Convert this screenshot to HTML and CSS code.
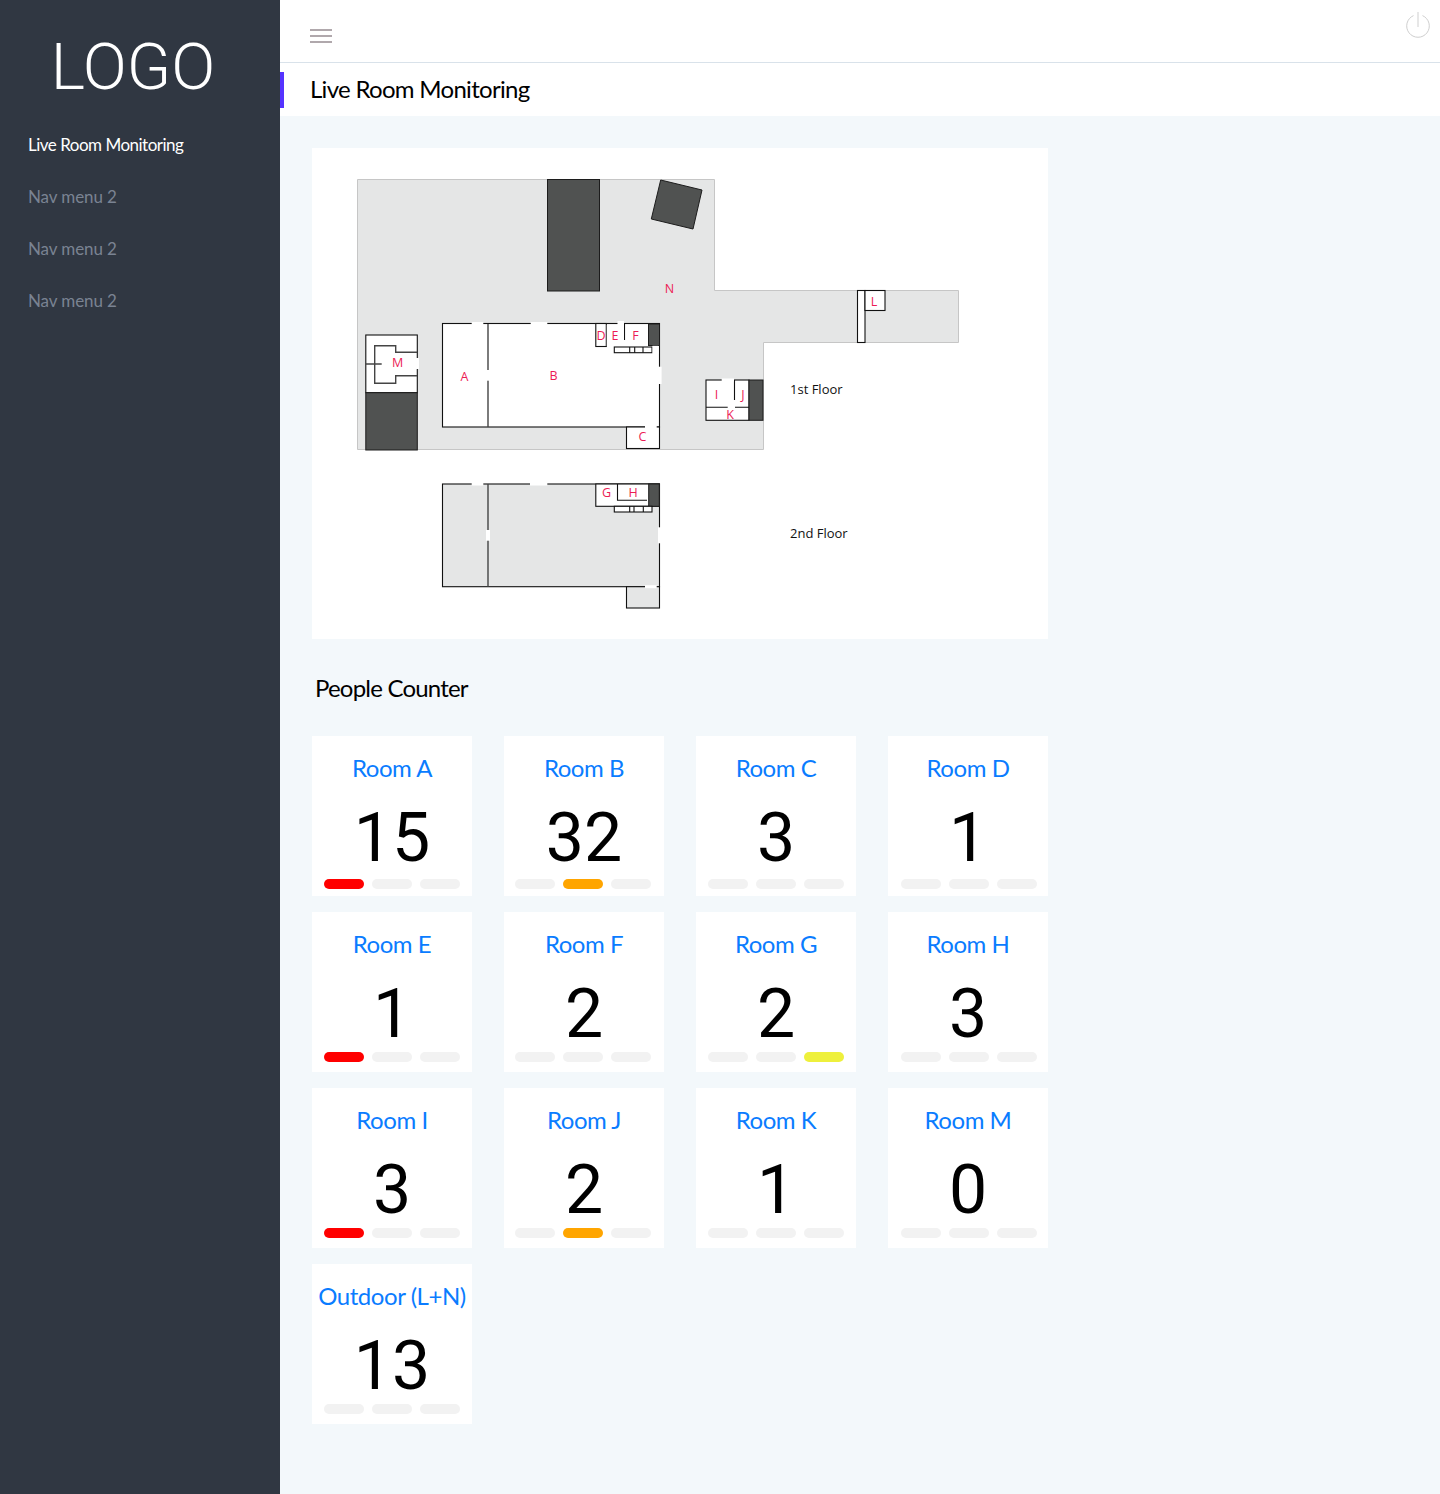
FILE: index.html
```html
<!DOCTYPE html>
<html lang="en">
<head>
<meta charset="utf-8">
<title>Live Room Monitoring</title>
<link rel="stylesheet" href="styles.css">
</head>
<body>
<div class="app">
  <aside class="sidebar">
    <div class="logo">LOGO</div>
    <nav class="nav">
      <a class="nav-item active">Live Room Monitoring</a>
      <a class="nav-item">Nav menu 2</a>
      <a class="nav-item">Nav menu 2</a>
      <a class="nav-item">Nav menu 2</a>
    </nav>
  </aside>
  <main class="main">
    <header class="topbar">
      <div class="burger"><span></span><span></span><span></span></div>
      <svg class="power" width="26" height="28" viewBox="0 0 26 28"><path d="M8.5 4.6a11.3 11.3 0 1 0 9 0"/><path d="M13 1v15"/></svg>
    </header>
    <div class="titlebar"><span class="accent"></span><h1 class="title">Live Room Monitoring</h1></div>
    <section class="content">
      <div class="plan">
        <svg class="plan-svg" width="736" height="491" viewBox="312 148 736 491">
          <path class="ground" d="M357.5 179.5H714.5V290.5H958.5V342.5H763.5V449.5H357.5Z"/>
          <rect class="dark" x="547.5" y="179.5" width="52" height="111.5"/>
          <path class="dark" d="M660.7 180L702 190L693 229L651.3 219Z"/>
          <!-- 1st floor main block -->
          <rect class="room" x="442.5" y="323.5" width="217" height="103.5"/>
          <path class="wall-soft" d="M488 324V427"/>
          <rect class="room" x="626.5" y="427" width="33" height="21.5"/>
          <rect class="room" x="595.8" y="323.5" width="10.5" height="23"/>
          <path class="wall" d="M624.5 324V340"/>
          <rect class="dark" x="648.5" y="324" width="11" height="21.5"/>
          <rect class="room" x="614.3" y="347" width="37.7" height="5.7"/>
          <path class="wall" d="M629.7 347V352.7M634.7 347V352.7M643 347V352.7"/>
          <rect class="gap" x="606.8" y="325" width="10" height="21"/>
          <rect class="gap" x="617.5" y="321" width="6.5" height="19"/>
          <rect class="gap" x="471.7" y="322" width="11.6" height="3"/>
          <rect class="gap" x="530.7" y="322" width="16.6" height="3"/>
          <rect class="gap" x="486" y="370" width="4" height="10.7"/>
          <rect class="gap" x="658" y="366.7" width="3.6" height="17.3"/>
          <rect class="gap" x="645" y="425.5" width="11.7" height="3"/>
          <rect class="gap" x="652.5" y="345.8" width="6" height="8"/>
          <!-- M block -->
          <rect class="room" x="365.8" y="335" width="51.5" height="57.7"/>
          <rect class="dark" x="365.8" y="392.7" width="51.5" height="57.3"/>
          <path class="wall-soft" d="M417 352.3H395.7V345.7H374.7V383.3H395.7V375.7H417M366 364H381.7"/>
          <rect class="gap" x="415.5" y="358" width="3.5" height="11"/>
          <!-- L -->
          <rect class="room" x="857.5" y="290.5" width="7.5" height="52"/>
          <rect class="room" x="865" y="290.5" width="20" height="20"/>
          <!-- I J K -->
          <rect class="room" x="706" y="380" width="43" height="40.3"/>
          <rect class="dark" x="749" y="380" width="14" height="40.3"/>
          <path class="wall" d="M706 407.3H749M734.5 380V400"/>
          <rect class="gap" x="721.7" y="378.5" width="12.3" height="3"/>
          <rect class="gap" x="727.7" y="405.8" width="7.3" height="3"/>
          <!-- 2nd floor -->
          <rect class="room-gray" x="442.5" y="484" width="217" height="102.7"/>
          <path class="wall-soft" d="M488 484V586.7"/>
          <rect class="room-gray" x="626.5" y="586.7" width="33" height="21.3"/>
          <rect class="room" x="595.8" y="484" width="63.5" height="22.3"/>
          <path class="wall" d="M617.5 484V500.3H647"/>
          <rect class="dark" x="648.7" y="484" width="10.6" height="22.3"/>
          <rect class="room" x="614.3" y="506.3" width="37.7" height="5.7"/>
          <path class="wall" d="M629.7 506.3V512M634 506.3V512M643.3 506.3V512"/>
          <rect class="gap" x="471.7" y="482.5" width="11.6" height="3"/>
          <rect class="gap" x="530" y="482.5" width="17.3" height="3"/>
          <rect class="gap" x="486" y="530" width="4" height="10.7"/>
          <rect class="gap" x="658" y="527.3" width="3.6" height="16"/>
          <rect class="gap" x="645" y="585.2" width="11.7" height="3"/>
          <!-- labels -->
          <text class="lbl" x="464.5" y="381">A</text>
          <text class="lbl" x="553.5" y="380">B</text>
          <text class="lbl" x="642.5" y="441">C</text>
          <text class="lbl" x="601" y="340">D</text>
          <text class="lbl" x="615" y="339.5">E</text>
          <text class="lbl" x="635.5" y="339.5">F</text>
          <text class="lbl" x="606.5" y="497">G</text>
          <text class="lbl" x="633" y="497">H</text>
          <text class="lbl" x="716.5" y="398.5">I</text>
          <text class="lbl" x="743" y="398.5">J</text>
          <text class="lbl" x="730" y="419">K</text>
          <text class="lbl" x="874" y="306">L</text>
          <text class="lbl" x="397.5" y="367">M</text>
          <text class="lbl" x="669.5" y="293">N</text>
          <text class="floor" x="790" y="394">1st Floor</text>
          <text class="floor" x="790" y="538">2nd Floor</text>
        </svg>
      </div>
      <h2 class="section-title">People Counter</h2>
      <div class="cards">
        <div class="card"><div class="card-name">Room A</div><div class="card-num">15</div><div class="bars"><i class="red"></i><i></i><i></i></div></div>
        <div class="card"><div class="card-name">Room B</div><div class="card-num">32</div><div class="bars"><i></i><i class="orange"></i><i></i></div></div>
        <div class="card"><div class="card-name">Room C</div><div class="card-num">3</div><div class="bars"><i></i><i></i><i></i></div></div>
        <div class="card"><div class="card-name">Room D</div><div class="card-num">1</div><div class="bars"><i></i><i></i><i></i></div></div>
        <div class="card"><div class="card-name">Room E</div><div class="card-num">1</div><div class="bars"><i class="red"></i><i></i><i></i></div></div>
        <div class="card"><div class="card-name">Room F</div><div class="card-num">2</div><div class="bars"><i></i><i></i><i></i></div></div>
        <div class="card"><div class="card-name">Room G</div><div class="card-num">2</div><div class="bars"><i></i><i></i><i class="yellow"></i></div></div>
        <div class="card"><div class="card-name">Room H</div><div class="card-num">3</div><div class="bars"><i></i><i></i><i></i></div></div>
        <div class="card"><div class="card-name">Room I</div><div class="card-num">3</div><div class="bars"><i class="red"></i><i></i><i></i></div></div>
        <div class="card"><div class="card-name">Room J</div><div class="card-num">2</div><div class="bars"><i></i><i class="orange"></i><i></i></div></div>
        <div class="card"><div class="card-name">Room K</div><div class="card-num">1</div><div class="bars"><i></i><i></i><i></i></div></div>
        <div class="card"><div class="card-name">Room M</div><div class="card-num">0</div><div class="bars"><i></i><i></i><i></i></div></div>
        <div class="card"><div class="card-name">Outdoor (L+N)</div><div class="card-num">13</div><div class="bars"><i></i><i></i><i></i></div></div>
      </div>
    </section>
  </main>
</div>
</body>
</html>
```
FILE: styles.css
```css
* { box-sizing: border-box; }
html, body { margin: 0; padding: 0; }
body { font-family: "Lato", "Liberation Sans", sans-serif; font-weight: 300; background: #f3f8fb; color: #000; }
.app { display: flex; min-height: 1494px; }

.sidebar { width: 280px; flex: none; background: #303742; }
.logo { font-family: Roboto, sans-serif; font-weight: 300; font-size: 65px; line-height: 74px; color: #fff; text-align: center; padding: 30px 14px 0 0; }
.nav { display: flex; flex-direction: column; margin-top: 14px; }
.nav-item { height: 52px; display: flex; align-items: center; padding-left: 28px; font-size: 17px; font-weight: 400; letter-spacing: -0.1px; color: #7a8392; }
.nav-item.active { color: #fff; letter-spacing: -0.5px; }

.main { flex: 1; min-width: 0; display: flex; flex-direction: column; }
.topbar { height: 63px; background: #fff; border-bottom: 1px solid #d9e2ea; display: flex; justify-content: space-between; align-items: flex-start; padding: 0 9px 0 30px; }
.burger { display: flex; flex-direction: column; gap: 4.5px; width: 22px; margin-top: 29px; }
.burger span { height: 1.5px; background: #b0a8ac; }
.power { margin-top: 11px; fill: none; stroke: #cfcfcf; stroke-width: 1; }

.titlebar { height: 53px; background: #fff; display: flex; align-items: center; }
.accent { width: 4px; height: 36px; background: #5533ff; flex: none; }
.title { margin: 0 0 2px 26px; font-size: 24px; font-weight: 400; line-height: 51px; letter-spacing: -0.7px; }

.content { padding: 32px 0 0 32px; }
.plan { width: 736px; height: 491px; background: #fff; }
.plan-svg { display: block; }
.ground { fill: #e5e6e6; stroke: #c6c6c6; stroke-width: 1; }
.dark { fill: #505251; stroke: #1c1c1c; stroke-width: 1; }
.room { fill: #fff; stroke: #111; stroke-width: 1.1; }
.room-gray { fill: #e5e6e6; stroke: #111; stroke-width: 1.1; }
.wall { fill: none; stroke: #111; stroke-width: 1.1; }
.wall-soft { fill: none; stroke: #444; stroke-width: 1.4; }
.gap { fill: #fff; stroke: none; }
.lbl { font-family: "Open Sans", sans-serif; font-size: 12.5px; font-weight: 400; fill: #ec1c55; text-anchor: middle; }
.floor { font-family: "Open Sans", sans-serif; font-size: 13px; font-weight: 400; fill: #111; }

.section-title { margin: 0; padding-left: 3px; height: 97px; font-size: 24px; font-weight: 400; line-height: 98px; letter-spacing: -0.8px; }

.cards { display: grid; grid-template-columns: repeat(4, 160px); gap: 16px 32px; }
.card { height: 160px; background: #fff; display: flex; flex-direction: column; align-items: center; }
.card-name { margin-top: 15px; font-size: 24px; font-weight: 400; line-height: 34px; letter-spacing: -0.45px; color: #0a7cff; white-space: nowrap; }
.card-num { font-family: Roboto, sans-serif; font-size: 68px; line-height: 76px; margin-top: 15px; color: #000; font-weight: 400; }
.bars { display: flex; gap: 8px; margin-top: auto; margin-bottom: 10px; }
.bars i { width: 40px; height: 10px; border-radius: 5px; background: #f2f2f2; display: block; }
.bars i.red { background: #ff0000; }
.bars i.orange { background: #ffa500; }
.bars i.yellow { background: #eef03c; }
.card:nth-child(4n+2) .bars { margin-left: -2px; }
.card:nth-child(4n) .bars { margin-left: 2px; }
.card:nth-child(-n+4) .bars { margin-bottom: 7px; }
```
